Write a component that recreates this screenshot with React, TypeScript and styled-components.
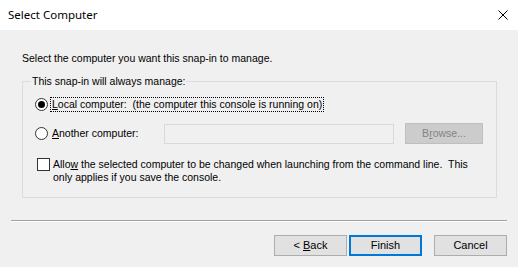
import React from "react";
import styled, { createGlobalStyle } from "styled-components";

const Global = createGlobalStyle`
  html, body { margin: 0; padding: 0; background: #f0f0f0; }
  body { font-family: "Liberation Sans", Arial, sans-serif; font-size: 10.5px; color: #000; }
  * { box-sizing: border-box; }
`;

const Window = styled.div`
  width: 518px;
  height: 267px;
  display: flex;
  flex-direction: column;
  background: #f0f0f0;
  overflow: hidden;
`;

const TitleBar = styled.div`
  height: 30px;
  flex: 0 0 30px;
  background: #fff;
  display: flex;
  align-items: center;
  justify-content: space-between;
  padding: 0 10px 0 8px;
`;

const Title = styled.span`
  font-family: "Noto Sans", "Open Sans", sans-serif;
  font-size: 11.5px;
  color: #000;
  margin-top: -1px;
`;

const Close = styled.svg`
  width: 10px;
  height: 10px;
  display: block;
`;

const Body = styled.div`
  display: flex;
  flex-direction: column;
  padding: 22px 11px 0 11px;
  flex: 1;
`;

const Intro = styled.div`
  line-height: 13px;
  padding-left: 11px;
`;

const Group = styled.fieldset`
  margin: 10px 10px 0 11px;
  padding: 9px 11px 13px 12px;
  border: 1px solid #dcdcdc;
  display: flex;
  flex-direction: column;
  min-width: 0;
`;

const Legend = styled.legend`
  padding: 0 1px;
  margin-left: -4px;
  line-height: 13px;
`;

const OptionRow = styled.div<{ $h: number; $gap?: number }>`
  display: flex;
  align-items: center;
  height: ${(p) => p.$h}px;
  margin-top: ${(p) => p.$gap ?? 0}px;
`;

const RadioCell = styled.div`
  width: 129px;
  display: flex;
  align-items: center;
  flex: 0 0 auto;
`;

const Radio = styled.span<{ $checked?: boolean }>`
  width: 13px;
  height: 13px;
  border-radius: 50%;
  border: 1px solid #333;
  background: #fff;
  display: flex;
  align-items: center;
  justify-content: center;
  flex: 0 0 13px;
  &::after {
    content: "";
    width: 7px;
    height: 7px;
    border-radius: 50%;
    background: ${(p) => (p.$checked ? "#000" : "transparent")};
  }
`;

const Label = styled.span<{ $focus?: boolean }>`
  margin-left: 2px;
  white-space: pre;
  line-height: 13px;
  padding: 0 1px;
  border: 1px dotted ${(p) => (p.$focus ? "#000" : "transparent")};
`;

const U = styled.span`
  text-decoration: underline;
`;

const TextBox = styled.div`
  width: 230px;
  height: 20px;
  border: 1px solid #d9d9d9;
  background: #f0f0f0;
`;

const Button = styled.div<{ $disabled?: boolean; $default?: boolean }>`
  width: 73px;
  height: 21px;
  display: flex;
  align-items: center;
  justify-content: center;
  white-space: pre;
  background: ${(p) => (p.$disabled ? "#cccccc" : "#e1e1e1")};
  border: ${(p) => (p.$default ? "2px solid #0078d7" : p.$disabled ? "1px solid #bfbfbf" : "1px solid #adadad")};
  color: ${(p) => (p.$disabled ? "#838383" : "#000")};
  font-size: 11px;
  line-height: 13px;
`;

const BrowseButton = styled(Button)`
  width: 78px;
  margin-left: 11px;
  font-size: 10.5px;
`;

const CheckRow = styled.div`
  display: flex;
  align-items: flex-start;
  margin-top: 14px;
  padding-left: 2px;
`;

const Check = styled.span`
  width: 13px;
  height: 13px;
  border: 1px solid #333;
  background: #fff;
  flex: 0 0 13px;
`;

const CheckText = styled.div`
  margin-left: 3px;
  line-height: 13px;
  white-space: nowrap;
`;

const Separator = styled.div`
  margin-top: 22px;
  height: 2px;
  border-top: 1px solid #a0a0a0;
  border-bottom: 1px solid #ffffff;
`;

const ButtonRow = styled.div`
  display: flex;
  justify-content: flex-end;
  margin-top: 13px;
  gap: 2px;
`;

const CancelButton = styled(Button)`
  margin-left: 10px;
`;

export default function App() {
  return (
    <>
      <Global />
      <Window>
        <TitleBar>
          <Title>Select Computer</Title>
          <Close viewBox="0 0 10 10">
            <path d="M0.5 0.5 L9.5 9.5 M9.5 0.5 L0.5 9.5" stroke="#000" strokeWidth="1" fill="none" />
          </Close>
        </TitleBar>
        <Body>
          <Intro>Select the computer you want this snap-in to manage.</Intro>
          <Group>
            <Legend>This snap-in will always manage:</Legend>
            <OptionRow $h={15}>
              <Radio $checked />
              <Label $focus>
                <U>L</U>ocal computer:  (the computer this console is running on)
              </Label>
            </OptionRow>
            <OptionRow $h={21} $gap={11}>
              <RadioCell>
                <Radio />
                <Label>
                  <U>A</U>nother computer:
                </Label>
              </RadioCell>
              <TextBox />
              <BrowseButton $disabled>
                B<U>r</U>owse...
              </BrowseButton>
            </OptionRow>
            <CheckRow>
              <Check />
              <CheckText>
                Allo<U>w</U> the selected computer to be changed when launching from the command line.&nbsp; This
                <br />
                only applies if you save the console.
              </CheckText>
            </CheckRow>
          </Group>
          <Separator />
          <ButtonRow>
            <Button>
              {"< "}
              <U>B</U>ack
            </Button>
            <Button $default>Finish</Button>
            <CancelButton>Cancel</CancelButton>
          </ButtonRow>
        </Body>
      </Window>
    </>
  );
}
